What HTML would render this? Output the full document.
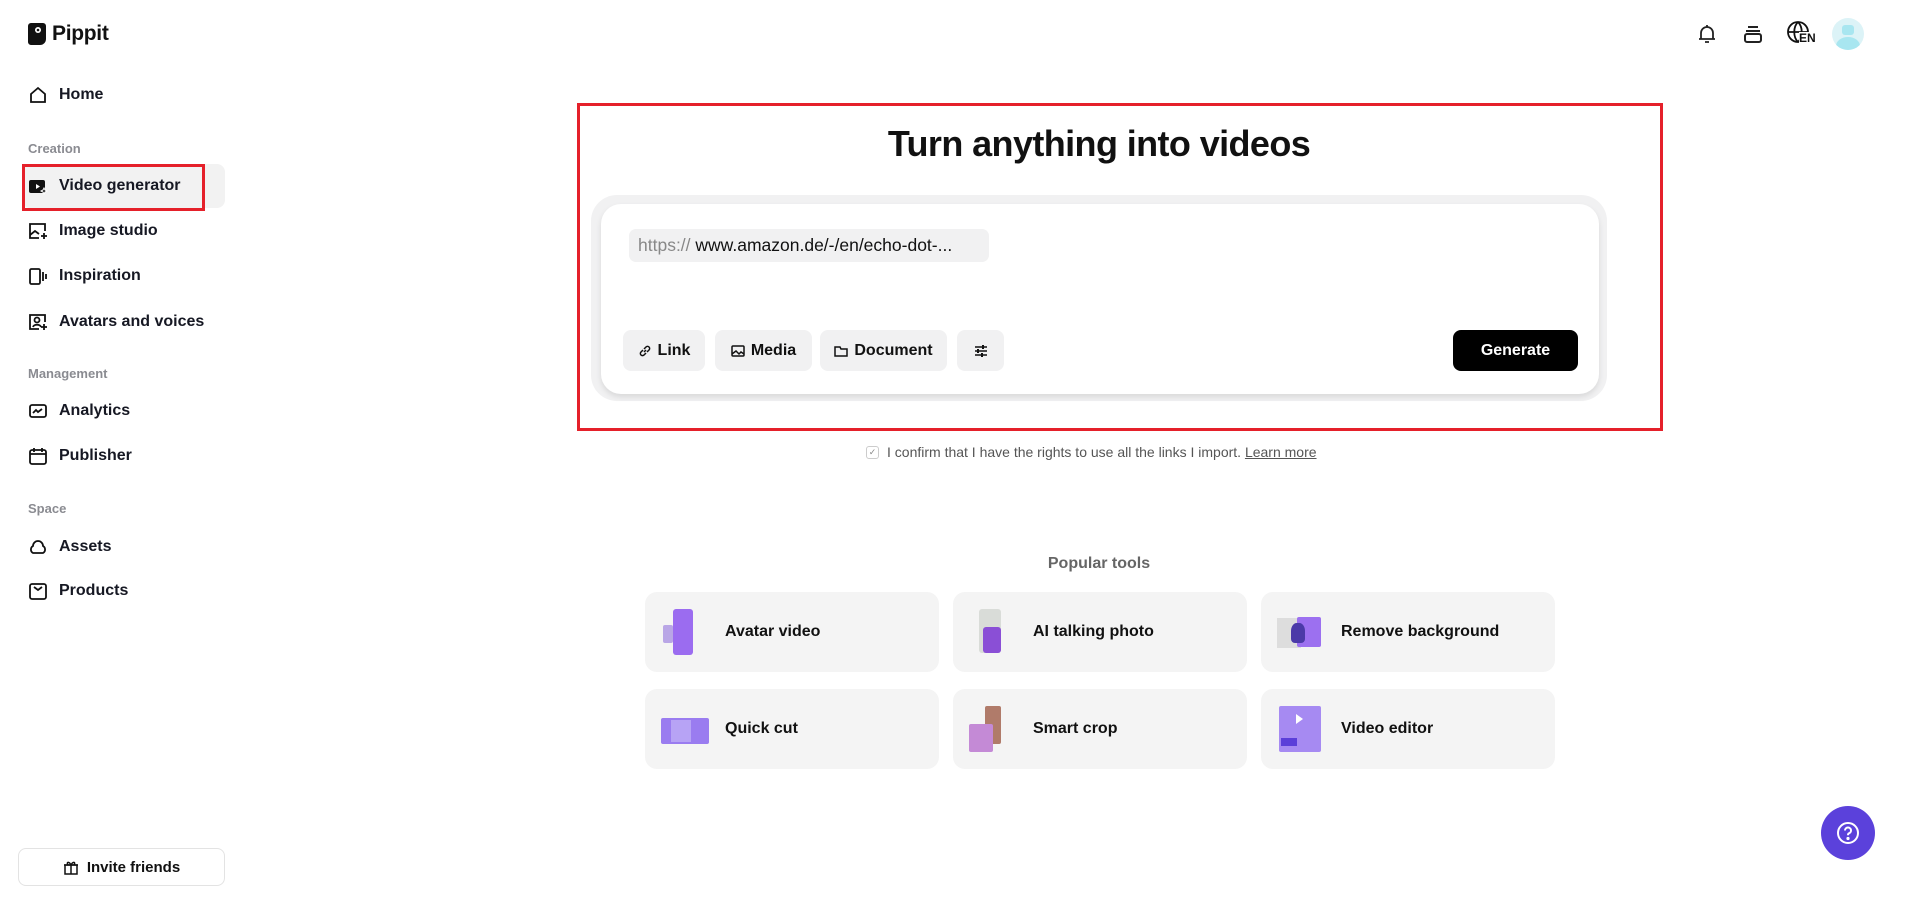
<!DOCTYPE html>
<html><head><meta charset="utf-8"><style>
*{box-sizing:border-box;margin:0;padding:0}
body{width:1919px;height:897px;background:#fff;font-family:"Liberation Sans",sans-serif;color:#111;position:relative;overflow:hidden}
.abs{position:absolute}
.nav{position:absolute;left:28px;display:flex;align-items:center;font-size:16px;font-weight:bold;color:#161823}
.nav svg{width:20px;height:20px;margin-right:11px}
.sec{position:absolute;left:28px;font-size:13px;color:#8a8b91;font-weight:bold}
.btn{position:absolute;top:330px;height:41px;background:#f1f1f2;border-radius:8px;display:flex;align-items:center;justify-content:center;font-size:16px;font-weight:bold;gap:6px}
.card{position:absolute;width:294px;height:80px;background:#f4f4f4;border-radius:12px;display:flex;align-items:center;font-size:16px;font-weight:bold}
.card .ic{width:46px;height:46px;margin:0 18px 0 16px;border-radius:4px;position:relative}
</style></head><body>
<div class="abs" style="left:28px;top:22px;display:flex;align-items:center;gap:6px">
<svg width="18" height="22" viewBox="0 0 18 22"><path d="M3 0h12a3 3 0 0 1 3 3v13a6 6 0 0 1-6 6H3a3 3 0 0 1-3-3V3a3 3 0 0 1 3-3z" fill="#111"/><circle cx="10" cy="7" r="3" fill="#fff"/><circle cx="10" cy="7" r="1.3" fill="#111"/></svg>
<span style="font-size:21px;font-weight:bold;letter-spacing:-0.3px">Pippit</span></div>

<div class="abs" style="left:22px;top:164px;width:203px;height:44px;background:#f2f2f2;border-radius:8px"></div>
<div class="abs" style="left:22px;top:164px;width:183px;height:47px;border:3px solid #e5202a"></div>

<div class="nav" style="top:85px"><svg viewBox="0 0 20 20" fill="none" stroke="#111" stroke-width="1.8"><path d="M3 9l7-6 7 6v8H3z"/></svg>Home</div>
<div class="sec" style="top:141px">Creation</div>
<div class="nav" style="top:176px"><svg viewBox="0 0 20 20"><rect x="1" y="4" width="16" height="13" rx="2" fill="#111"/><path d="M8 8l4 2.5-4 2.5z" fill="#fff"/><path d="M16 12l1 2 2 1-2 1-1 2-1-2-2-1 2-1z" fill="#111" stroke="#fff"/></svg>Video generator</div>
<div class="nav" style="top:221px"><svg viewBox="0 0 20 20" fill="none" stroke="#111" stroke-width="1.8"><path d="M17 10V3H2v14h9"/><path d="M2 14l5-4 4 3"/><path d="M16 12v6M13 15h6"/></svg>Image studio</div>
<div class="nav" style="top:266px"><svg viewBox="0 0 20 20" fill="none" stroke="#111" stroke-width="1.8"><rect x="2" y="3" width="10" height="15" rx="1.5"/><path d="M15 6v9M18 8v5"/></svg>Inspiration</div>
<div class="nav" style="top:312px"><svg viewBox="0 0 20 20" fill="none" stroke="#111" stroke-width="1.8"><path d="M17 10V3H2v14h9"/><circle cx="9" cy="8" r="2.5"/><path d="M5 15c1-3 7-3 8 0"/><path d="M16 12v6M13 15h6"/></svg>Avatars and voices</div>
<div class="sec" style="top:366px">Management</div>
<div class="nav" style="top:401px"><svg viewBox="0 0 20 20" fill="none" stroke="#111" stroke-width="1.8"><rect x="2" y="4" width="16" height="12" rx="2"/><path d="M5 12l3-3 2 2 4-3"/></svg>Analytics</div>
<div class="nav" style="top:446px"><svg viewBox="0 0 20 20" fill="none" stroke="#111" stroke-width="1.8"><rect x="2" y="4" width="16" height="14" rx="2"/><path d="M2 8h16M6 2v4M14 2v4"/></svg>Publisher</div>
<div class="sec" style="top:501px">Space</div>
<div class="nav" style="top:537px"><svg viewBox="0 0 20 20" fill="none" stroke="#111" stroke-width="1.8"><path d="M5 16a4 4 0 0 1 0-7 5 5 0 0 1 10 0 4 4 0 0 1 0 7z"/></svg>Assets</div>
<div class="nav" style="top:581px"><svg viewBox="0 0 20 20" fill="none" stroke="#111" stroke-width="1.8"><rect x="2" y="3" width="16" height="15" rx="2"/><path d="M6 6l4 3 4-3"/></svg>Products</div>

<div class="abs" style="left:18px;top:848px;width:207px;height:38px;border:1px solid #e3e3e3;border-radius:8px;display:flex;align-items:center;justify-content:center;gap:8px;font-size:15px;font-weight:bold">
<svg width="16" height="16" viewBox="0 0 16 16" fill="none" stroke="#111" stroke-width="1.5"><rect x="2" y="6" width="12" height="9"/><path d="M1 6h14M8 6v9M8 6C6 2 3 3 5 6M8 6c2-4 5-3 3 0"/></svg>Invite friends</div>

<svg class="abs" style="left:1695px;top:22px" width="24" height="24" viewBox="0 0 24 24" fill="none" stroke="#222" stroke-width="1.8"><path d="M6 17V11a6 6 0 0 1 12 0v6M4 17h16M10 20h4"/><path d="M12 3v2"/></svg>
<svg class="abs" style="left:1741px;top:22px" width="24" height="24" viewBox="0 0 24 24" fill="none" stroke="#222" stroke-width="2"><path d="M7 5h10M5 9h14"/><rect x="4" y="12" width="16" height="8" rx="2"/></svg>
<div class="abs" style="left:1786px;top:20px;width:30px;height:30px">
<svg width="24" height="24" viewBox="0 0 24 24" fill="none" stroke="#111" stroke-width="1.8"><circle cx="12" cy="12" r="10"/><path d="M2 12h20M12 2c-5 5-5 15 0 20M12 2c5 5 5 15 0 20"/></svg>
<span class="abs" style="left:13px;top:12px;font-size:12px;font-weight:bold;background:#fff;line-height:13px">EN</span></div>
<div class="abs" style="left:1832px;top:18px;width:32px;height:32px;border-radius:50%;background:#dcf3f7;overflow:hidden">
<div class="abs" style="left:10px;top:7px;width:12px;height:10px;background:#a8e6f0;border-radius:3px"></div>
<div class="abs" style="left:4px;top:19px;width:24px;height:18px;background:#a8e6f0;border-radius:50%"></div></div>

<div class="abs" style="left:577px;top:103px;width:1086px;height:328px;border:3px solid #e5202a"></div>
<div class="abs" style="left:799px;width:600px;top:123px;text-align:center;font-size:36px;font-weight:bold;letter-spacing:-0.6px">Turn anything into videos</div>
<div class="abs" style="left:591px;top:195px;width:1016px;height:206px;background:#f1f1f2;border-radius:26px"></div>
<div class="abs" style="left:601px;top:204px;width:998px;height:190px;background:#fff;border-radius:20px;box-shadow:0 3px 6px rgba(0,0,0,0.1)"></div>
<div class="abs" style="left:629px;top:229px;width:360px;height:33px;background:#f1f1f2;border-radius:7px;display:flex;align-items:center;padding-left:9px;font-size:17.5px"><span style="color:#888">https://</span>&nbsp;<span>www.amazon.de/-/en/echo-dot-...</span></div>

<div class="btn" style="left:623px;width:82px"><svg width="14" height="14" viewBox="0 0 14 14" fill="none" stroke="#111" stroke-width="1.5"><path d="M6 8l2-2M5 6L3 8a2 2 0 0 0 3 3l2-2M9 8l2-2a2 2 0 0 0-3-3L6 5"/></svg>Link</div>
<div class="btn" style="left:715px;width:97px"><svg width="14" height="14" viewBox="0 0 14 14" fill="none" stroke="#111" stroke-width="1.5"><rect x="1" y="2" width="12" height="10" rx="1"/><path d="M1 10l4-3 3 3 2-2 3 2"/></svg>Media</div>
<div class="btn" style="left:820px;width:127px"><svg width="14" height="14" viewBox="0 0 14 14" fill="none" stroke="#111" stroke-width="1.5"><path d="M1 3h5l1 2h6v7H1z"/></svg>Document</div>
<div class="btn" style="left:957px;width:47px"><svg width="16" height="16" viewBox="0 0 16 16" fill="none" stroke="#111" stroke-width="1.5"><path d="M2 4h12M2 8h12M2 12h12"/><path d="M10 2v4M5 6v4M9 10v4" stroke-width="2"/></svg></div>
<div class="btn" style="left:1453px;width:125px;background:#000;color:#fff">Generate</div>

<div class="abs" style="left:866px;top:444px;display:flex;align-items:center;font-size:14px;color:#555">
<span style="width:13px;height:13px;border:1px solid #ccc;border-radius:3px;font-size:9px;display:inline-flex;align-items:center;justify-content:center;margin-right:8px;color:#888">✓</span>I confirm that I have the rights to use all the links I import.&nbsp;<u>Learn more</u></div>

<div class="abs" style="left:899px;width:400px;top:555px;text-align:center;font-size:16px;font-weight:bold;color:#666">Popular tools</div>

<div class="card" style="left:645px;top:592px"><div class="ic"><div class="abs" style="left:12px;top:0;width:20px;height:46px;background:#9b6cf0;border-radius:3px"></div><div class="abs" style="left:2px;top:16px;width:10px;height:18px;background:#b9a6e6;border-radius:2px"></div></div>Avatar video</div>
<div class="card" style="left:953px;top:592px"><div class="ic"><div class="abs" style="left:10px;top:0;width:22px;height:44px;background:#d9dcd8;border-radius:3px"></div><div class="abs" style="left:14px;top:18px;width:18px;height:26px;background:#8a4fd6;border-radius:3px"></div></div>AI talking photo</div>
<div class="card" style="left:1261px;top:592px"><div class="ic"><div class="abs" style="left:0;top:9px;width:24px;height:30px;background:#ddd"></div><div class="abs" style="left:20px;top:8px;width:24px;height:30px;background:#9c70f0;border-radius:2px"></div><div class="abs" style="left:14px;top:14px;width:14px;height:20px;background:#4b3aa8;border-radius:40% 40% 4px 4px"></div></div>Remove background</div>
<div class="card" style="left:645px;top:689px"><div class="ic"><div class="abs" style="left:0;top:12px;width:48px;height:26px;background:#9a7cf0;border-radius:2px"></div><div class="abs" style="left:10px;top:14px;width:20px;height:22px;background:#b7a3f5"></div></div>Quick cut</div>
<div class="card" style="left:953px;top:689px"><div class="ic"><div class="abs" style="left:16px;top:0;width:16px;height:38px;background:#b07b6a;border-radius:2px"></div><div class="abs" style="left:0;top:18px;width:24px;height:28px;background:#c48ad6;border-radius:2px"></div></div>Smart crop</div>
<div class="card" style="left:1261px;top:689px"><div class="ic"><div class="abs" style="left:2px;top:0;width:42px;height:46px;background:#a68af2;border-radius:2px"></div><div class="abs" style="left:4px;top:32px;width:16px;height:8px;background:#5b3fd9"></div><div class="abs" style="left:19px;top:8px;width:0;height:0;border-left:7px solid #fff;border-top:5px solid transparent;border-bottom:5px solid transparent"></div></div>Video editor</div>

<div class="abs" style="left:1821px;top:806px;width:54px;height:54px;border-radius:50%;background:#5b41db;display:flex;align-items:center;justify-content:center">
<svg width="26" height="26" viewBox="0 0 26 26" fill="none" stroke="#fff" stroke-width="2"><circle cx="13" cy="13" r="10"/><path d="M10 10.5a3 3 0 1 1 4 2.8c-1 .4-1 1-1 2"/><circle cx="13" cy="18.5" r=".6" fill="#fff"/></svg></div>
</body></html>
